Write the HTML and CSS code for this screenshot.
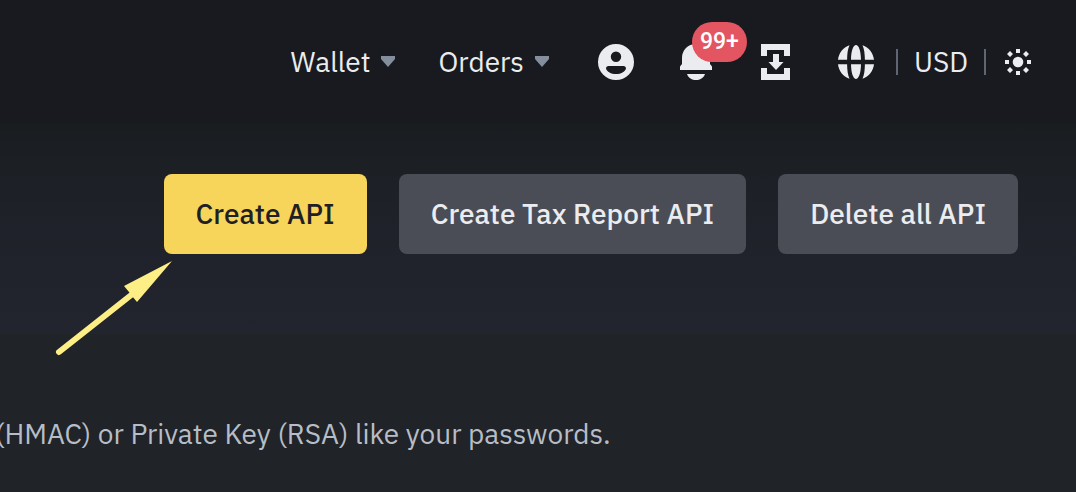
FILE: index.html
```
<!DOCTYPE html>
<html lang="en">
<head>
    <meta charset="UTF-8">
    <meta name="viewport" content="width=device-width, initial-scale=1.0">
    <title>API Management</title>
    <link rel="stylesheet" href="styles.css">
</head>
<body>

    <!-- Top navigation -->
    <header class="navbar">
        <nav class="menus">
            <button type="button" class="nav-btn">Wallet
                <svg class="caret" viewBox="0 0 16 12"><path d="M1 0H15V3L8 11L1 3Z"/></svg>
            </button>
            <button type="button" class="nav-btn">Orders
                <svg class="caret" viewBox="0 0 16 12"><path d="M1 0H15V3L8 11L1 3Z"/></svg>
            </button>
        </nav>

        <div class="icons">
            <button type="button" class="icon-btn" aria-label="Account">
                <svg viewBox="0 0 48 48"><path fill-rule="evenodd" d="M24 6a18 18 0 1 0 0 36a18 18 0 1 0 0-36ZM24 13.500a5.200 5.200 0 1 1 0 10.400a5.200 5.200 0 1 1 0-10.400ZM16.500 28H31.500C33 28 34 29 34 30.500C33 34 29 36 24 36S15 34 14 30.500C14 29 15 28 16.500 28Z"/></svg>
            </button>
            <button type="button" class="icon-btn" aria-label="Notifications">
                <svg viewBox="0 0 48 48"><path d="M24 6C16 6 10 12 10 20V26L8 28.500V32H40V28.500L38 26V20C38 12 32 6 24 6ZM15 36H33C31.500 40 28 42 24 42S16.500 40 15 36Z"/></svg>
                <span class="badge">99+</span>
            </button>
            <button type="button" class="icon-btn" aria-label="Downloads">
                <svg viewBox="0 0 48 48"><path d="M9 6H38V18H32V12H15V18H9ZM9 30H15V36H32V30H38V42H9ZM21 16H27V24H31.500L24 32L16.500 24H21Z"/></svg>
            </button>
            <button type="button" class="icon-btn" aria-label="Language">
                <svg viewBox="0 0 48 48"><path d="M24 7C26.500 7 28.800 12 29 21.700H19C19.200 12 21.500 7 24 7ZM19 26.300H29C28.800 36 26.500 41 24 41S19.200 36 19 26.300ZM17.500 7.200C15.800 11 15.200 15.500 15.100 21.700H6C6.800 14.800 11 9.500 17.500 7.200ZM30.500 7.200C37 9.500 41.200 14.800 42 21.700H32.900C32.800 15.500 32.200 11 30.500 7.200ZM6 26.300H15.100C15.200 32.500 15.800 37 17.500 40.800C11 38.500 6.800 33.200 6 26.300ZM32.900 26.300H42C41.200 33.200 37 38.500 30.500 40.800C32.200 37 32.800 32.500 32.900 26.300Z"/></svg>
            </button>
        </div>

        <div class="settings">
            <button type="button" class="nav-btn currency">USD</button>
            <button type="button" class="icon-btn theme" aria-label="Theme">
                <svg viewBox="0 0 36 36">
                    <circle cx="18" cy="18" r="5.300"/>
                    <path d="M16 5h4v4h-4ZM16 27h4v4h-4ZM5 16h4v4h-4ZM27 16h4v4h-4ZM10 7l3 3l-3 3l-3-3ZM26 7l3 3l-3 3l-3-3ZM10 23l3 3l-3 3l-3-3ZM26 23l3 3l-3 3l-3-3Z"/>
                </svg>
            </button>
        </div>
    </header>

    <!-- API actions -->
    <section class="actions">
        <div class="create">
            <button type="button" class="btn btn-primary">Create API</button>
            <svg class="pointer" viewBox="0 0 118 96">
                <path class="pointer-line" d="M4 91L80 31"/>
                <path class="pointer-head" d="M117 0L69 25L74 31L77 35L82 41Z"/>
            </svg>
        </div>
        <button type="button" class="btn">Create Tax Report API</button>
        <button type="button" class="btn">Delete all API</button>
    </section>

    <main class="content">
        <p class="tip">(HMAC) or Private Key (RSA) like your passwords.</p>
    </main>

</body>
</html>
```
FILE: styles.css
```
* {
    box-sizing: border-box;
}

body {
    margin: 0;
    min-height: 100vh;
    background: #202327;
    color: #eaecef;
    font-family: "IBM Plex Sans", Roboto, sans-serif;
    font-size: 28px;
    line-height: 40px;
    overflow-x: hidden;
}

button {
    font: inherit;
    color: inherit;
    background: none;
    border: none;
    padding: 0;
    cursor: pointer;
    white-space: nowrap;
}

.navbar {
    display: flex;
    justify-content: flex-end;
    align-items: center;
    height: 124px;
    padding-right: 40px;
    background: #191a1f;
}

.menus {
    display: flex;
    gap: 42px;
    margin-right: 42px;
}

.nav-btn {
    display: flex;
    align-items: center;
    gap: 10px;
}

.caret {
    width: 16px;
    height: 12px;
    fill: #848e9c;
}

.icons {
    display: flex;
    gap: 32px;
}

.icon-btn {
    position: relative;
    width: 48px;
    height: 48px;
    fill: #eaecef;
}

.icon-btn svg {
    display: block;
    width: 100%;
    height: 100%;
}

.badge {
    position: absolute;
    left: 20px;
    top: -16px;
    padding: 0 8px;
    border-radius: 20px;
    background: #e35561;
    color: #fff;
    font-family: Roboto, sans-serif;
    font-size: 23px;
    font-weight: 500;
}

.settings {
    display: flex;
    align-items: center;
    gap: 14px;
    margin-left: 16px;
}

.currency {
    height: 26px;
    padding: 0 16px;
    border-left: 2px solid #5e6673;
    border-right: 2px solid #5e6673;
}

.theme {
    width: 36px;
    height: 36px;
}

.actions {
    display: flex;
    justify-content: flex-end;
    gap: 32px;
    padding: 50px 58px 80px 0;
    background: linear-gradient(#1a1d20, #1e2128 40%, #22252e);
}

.create {
    position: relative;
}

.btn {
    height: 80px;
    padding: 0 32px;
    border-radius: 8px;
    background: #4a4d55;
    font-weight: 500;
}

.btn-primary {
    background: #f7d55a;
    color: #1e2026;
}

/* hand-drawn arrow below the create button */
.pointer {
    position: absolute;
    right: 194px;
    top: 87px;
    width: 118px;
    height: 96px;
}

.pointer-line {
    stroke: #fdee86;
    stroke-width: 6px;
    stroke-linecap: round;
}

.pointer-head {
    fill: #fdee86;
}

.content {
    padding: 80px 0 36px;
}

.tip {
    margin: 0;
    text-indent: -5px;
    color: #b7bdc6;
}
```
